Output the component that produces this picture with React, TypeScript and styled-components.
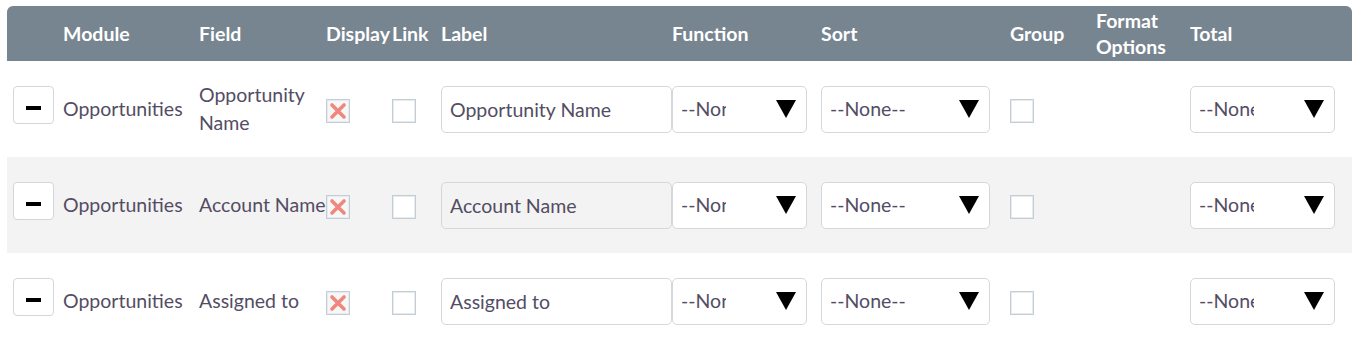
import styled, { createGlobalStyle } from "styled-components";

const GlobalStyle = createGlobalStyle`
  body {
    margin: 0;
    background: #ffffff;
    font-family: Lato, "Open Sans", "Liberation Sans", sans-serif;
  }
`;

type ReportField = {
  module: string;
  field: string;
  label: string;
  readOnly?: boolean;
};

const fields: ReportField[] = [
  { module: "Opportunities", field: "Opportunity Name", label: "Opportunity Name" },
  { module: "Opportunities", field: "Account Name", label: "Account Name", readOnly: true },
  { module: "Opportunities", field: "Assigned to", label: "Assigned to" },
];

const columns = [56, 136, 127, 66, 49, 231, 149, 189, 86, 94, 162];

export default function App() {
  return (
    <>
      <GlobalStyle />
      <Page>
        <Grid>
          <colgroup>
            {columns.map((w, i) => (
              <col key={i} style={{ width: w }} />
            ))}
          </colgroup>
          <thead>
            <tr>
              <HeadCell />
              <HeadCell>Module</HeadCell>
              <HeadCell>Field</HeadCell>
              <HeadCell>Display</HeadCell>
              <HeadCell>Link</HeadCell>
              <HeadCell>Label</HeadCell>
              <HeadCell>Function</HeadCell>
              <HeadCell>Sort</HeadCell>
              <HeadCell>Group</HeadCell>
              <HeadCell>
                Format
                <br />
                Options
              </HeadCell>
              <HeadCell>Total</HeadCell>
            </tr>
          </thead>
          <tbody>
            {fields.map((f, i) => (
              <Row key={i} $shaded={i % 2 === 1}>
                <Cell>
                  <RemoveButton>
                    <MinusBar />
                  </RemoveButton>
                </Cell>
                <Cell>{f.module}</Cell>
                <Cell>{f.field}</Cell>
                <Cell>
                  <Check $checked>
                    <svg width="18" height="18" viewBox="0 0 18 18">
                      <path
                        d="M3 3 L15 15 M15 3 L3 15"
                        stroke="#f0877c"
                        strokeWidth="3.6"
                        strokeLinecap="round"
                      />
                    </svg>
                  </Check>
                </Cell>
                <Cell>
                  <Check />
                </Cell>
                <Cell>
                  <LabelInput value={f.label} readOnly $readOnly={f.readOnly} />
                </Cell>
                <Cell>
                  <Select $width={135} value="--None--" />
                </Cell>
                <Cell>
                  <Select $width={169} value="--None--" />
                </Cell>
                <Cell>
                  <Check />
                </Cell>
                <Cell />
                <Cell>
                  <Select $width={145} value="--None--" />
                </Cell>
              </Row>
            ))}
          </tbody>
        </Grid>
      </Page>
    </>
  );
}

function Select({ $width, value }: { $width: number; value: string }) {
  return (
    <SelectBox $width={$width}>
      <SelectValue>{value}</SelectValue>
      <Arrow width="20" height="18" viewBox="0 0 20 18">
        <path d="M0 0 H20 L10 18 Z" fill="#000" />
      </Arrow>
    </SelectBox>
  );
}

const Page = styled.div`
  padding: 6px 3px 0 7px;
`;

const Grid = styled.table`
  width: 1345px;
  table-layout: fixed;
  border-collapse: separate;
  border-spacing: 0;
  color: #534d64;
  font-size: 19.5px;
  line-height: 28px;
`;

const HeadCell = styled.th`
  height: 55px;
  padding: 0;
  background: #778591;
  color: #ffffff;
  font-weight: 700;
  font-size: 19.5px;
  line-height: 26px;
  text-align: left;
  vertical-align: middle;
  white-space: nowrap;
  &:first-child {
    border-top-left-radius: 6px;
  }
  &:last-child {
    border-top-right-radius: 6px;
  }
`;

const Row = styled.tr<{ $shaded: boolean }>`
  height: 96px;
  background: ${(p) => (p.$shaded ? "#f3f3f3" : "#ffffff")};
`;

const Cell = styled.td`
  padding: 0;
  vertical-align: middle;
  &:first-child {
    padding-left: 6px;
  }
`;

const RemoveButton = styled.button`
  display: flex;
  align-items: center;
  justify-content: center;
  width: 41px;
  height: 38px;
  margin-bottom: 8px;
  padding: 0;
  background: #ffffff;
  border: 1px solid #d3d6db;
  border-radius: 4px;
`;

const MinusBar = styled.span`
  display: block;
  width: 15px;
  height: 4px;
  margin-top: 5px;
  background: #000000;
`;

const Check = styled.span<{ $checked?: boolean }>`
  display: flex;
  align-items: center;
  justify-content: center;
  width: 24px;
  height: 24px;
  margin-top: 3px;
  box-sizing: border-box;
  border: 1px solid #c3cdd6;
  box-shadow: inset 0 0 0 1px #e6ebef;
  background: ${(p) => (p.$checked ? "#f7f7f7" : "#ffffff")};
`;

const LabelInput = styled.input<{ $readOnly?: boolean }>`
  display: block;
  width: 231px;
  height: 47px;
  box-sizing: border-box;
  padding: 0 0 0 8px;
  border: 1px solid #d3d8de;
  border-radius: 5px;
  background: ${(p) => (p.$readOnly ? "#f3f3f3" : "#ffffff")};
  color: #534d64;
  font-family: inherit;
  font-size: 19.5px;
  outline: none;
`;

const SelectBox = styled.div<{ $width: number }>`
  display: flex;
  align-items: center;
  position: relative;
  width: ${(p) => p.$width}px;
  height: 47px;
  box-sizing: border-box;
  padding-left: 8px;
  border: 1px solid #d3d8de;
  border-radius: 5px;
  background: #ffffff;
`;

const SelectValue = styled.span`
  display: block;
  width: calc(100% - 80px);
  overflow: hidden;
  white-space: nowrap;
`;

const Arrow = styled.svg`
  position: absolute;
  right: 10px;
  top: 13px;
`;
